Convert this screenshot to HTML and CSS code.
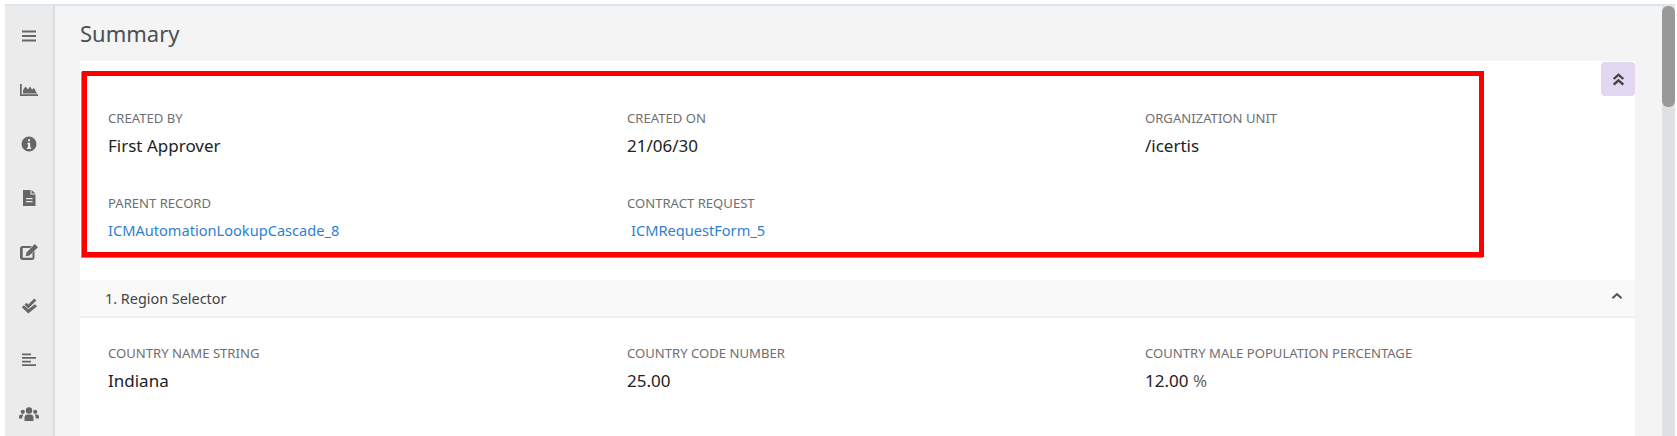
FILE: index.html
```html
<!DOCTYPE html>
<html>
<head>
    <title>Summary</title>
    <link rel="stylesheet" href="styles.css">
</head>
<body>
    <div class="app">
        <div class="sidebar">
            <svg class="nav-icon" viewBox="0 0 16 16"><path d="M1 2.500h14v2H1zM1 7h14v2H1zM1 11.500h14v2H1z"/></svg>
            <svg class="nav-icon" viewBox="0 0 18 16"><path d="M0 2h1.700v10.300H18V14H0z"/><path d="M3 11.500V8l2.500-3.500 2.500 3L10 4.500l2 3L14 6l3 5.500z"/></svg>
            <svg class="nav-icon" viewBox="0 0 16 16"><path fill-rule="evenodd" d="M8 .5a7.500 7.500 0 1 0 0 15 7.500 7.500 0 0 0 0-15zM7 3.200h2v2.100H7zM6.300 6.800h2.900v4.600h1v1.500H5.900v-1.500h1.100V8.300h-.7z"/></svg>
            <svg class="nav-icon" viewBox="0 0 16 16"><path fill-rule="evenodd" d="M2 0H9.500v4.500H14.500V16H2zM10.500 0L14.500 3.500h-4zM5 8h6.500v1.300H5zM5 11h6.500v1.300H5z"/></svg>
            <svg class="nav-icon" viewBox="0 0 18 16"><path fill-rule="evenodd" d="M2.500 2h9.500L10 4H3.200a.5.500 0 0 0-.5.500v8.800c0 .3.200.5.500.5h8.800a.5.500 0 0 0 .5-.5V9l2-2v6.500c0 1.400-1.100 2.500-2.500 2.500H2.500C1.100 16 0 14.900 0 13.500v-9C0 3.100 1.100 2 2.500 2z"/><path d="M14.800 0L18 3.200 9.500 11.500l-3.800.8.800-3.900z"/></svg>
            <svg class="nav-icon" viewBox="0 0 16 16"><path d="M13.300 .5L15.300 2.500 7.300 10.500 3.500 6.700 5.500 4.700l1.800 1.800z"/><path d="M14 6.200l2 2-8.700 7.300L.8 9.300l2-2 4.500 4z"/></svg>
            <svg class="nav-icon" viewBox="0 0 16 16"><path d="M1 1.500h9v1.700H1zM1 5.100h14v1.700H1zM1 8.700h9v1.700H1zM1 12.300h14V14H1z"/></svg>
            <svg class="nav-icon wide" viewBox="0 0 20 16"><circle cx="10" cy="4.500" r="3.200"/><circle cx="3.800" cy="5.800" r="2.100"/><circle cx="16.200" cy="5.800" r="2.100"/><path d="M5.500 15v-3.500C5.500 9.500 7 8.500 8 8.500h4c1 0 2.500 1 2.500 3V15zM0 12.500v-2c0-1.200 1-2 2-2h2.200c.4.300-.9.900-.9 4zM20 12.500v-2c0-1.200-1-2-2-2h-2.200c-.4.300.9.900.9 4z"/></svg>
        </div>

        <div class="main">
            <h1 class="page-title">Summary</h1>

            <div class="card">
                <button class="collapse-btn">
                    <svg viewBox="0 0 12 12"><path d="M6 .2l5.200 4.600-1.500 1.500L6 3.100 2.300 6.300.8 4.800z"/><path d="M6 5.400l5.200 4.600-1.500 1.500L6 8.300 2.300 11.500.8 10z"/></svg>
                </button>

                <div class="field-grid top-fields">
                    <div class="field">
                        <div class="field-label">CREATED BY</div>
                        <div class="field-value">First Approver</div>
                    </div>
                    <div class="field">
                        <div class="field-label">CREATED ON</div>
                        <div class="field-value">21/06/30</div>
                    </div>
                    <div class="field">
                        <div class="field-label">ORGANIZATION UNIT</div>
                        <div class="field-value">/icertis</div>
                    </div>
                    <div class="field">
                        <div class="field-label">PARENT RECORD</div>
                        <a class="field-link" href="#">ICMAutomationLookupCascade_8</a>
                    </div>
                    <div class="field">
                        <div class="field-label">CONTRACT REQUEST</div>
                        <a class="field-link indent" href="#">ICMRequestForm_5</a>
                    </div>
                </div>

                <!-- Red highlight drawn over the top fields -->
                <div class="highlight"></div>

                <div class="section-head">
                    <span>1. Region Selector</span>
                    <svg class="chevron" viewBox="0 0 12 8"><path d="M6 .8l5.300 4.800-1.400 1.500L6 3.500 2.100 7.100.7 5.600z"/></svg>
                </div>

                <div class="field-grid section-fields">
                    <div class="field">
                        <div class="field-label">COUNTRY NAME STRING</div>
                        <div class="field-value">Indiana</div>
                    </div>
                    <div class="field">
                        <div class="field-label">COUNTRY CODE NUMBER</div>
                        <div class="field-value">25.00</div>
                    </div>
                    <div class="field">
                        <div class="field-label">COUNTRY MALE POPULATION PERCENTAGE</div>
                        <div class="field-value">12.00 <span class="unit">%</span></div>
                    </div>
                </div>
            </div>
        </div>

        <div class="scrollbar">
            <div class="scroll-thumb"></div>
        </div>
    </div>
</body>
</html>
```

FILE: styles.css
```css
html, body {
    margin: 0;
    height: 100%;
    overflow: hidden;
    background-color: #fff;
}

body {
    font-family: "Noto Sans", "Open Sans", sans-serif;
    padding: 4px 2px 0 5px;
    box-sizing: border-box;
}

.app {
    display: flex;
    height: 432px;
    border-top: 2px solid #dbe5ee;
    box-sizing: border-box;
    background-color: #f4f4f4;
}

/* Left icon rail */
.sidebar {
    width: 48px;
    flex-shrink: 0;
    background-color: #ebebeb;
    border-right: 2px solid #dcdcdc;
    display: flex;
    flex-direction: column;
    align-items: center;
    padding-top: 22px;
    gap: 38px;
    overflow: hidden;
}

.nav-icon {
    height: 16px;
    width: 18px;
    flex-shrink: 0;
    fill: #666;
}

.nav-icon.wide {
    width: 22px;
}

.main {
    flex: 1;
    padding: 0 25px;
    min-width: 0;
}

.page-title {
    margin: 0;
    height: 55px;
    line-height: 54px;
    font-size: 22px;
    font-weight: 400;
    color: #4a4f57;
}

.card {
    position: relative;
    background-color: #fff;
    height: 375px;
    overflow: hidden;
}

.collapse-btn {
    position: absolute;
    top: 1px;
    right: 0;
    width: 34px;
    height: 34px;
    padding: 0;
    border: 0;
    border-radius: 4px;
    background-color: #e2d6f0;
}

.collapse-btn svg {
    display: block;
    width: 13px;
    height: 13px;
    margin: 0 auto;
    fill: #444;
}

.highlight {
    position: absolute;
    left: 2px;
    top: 10px;
    width: 1392px;
    height: 176px;
    border: 5px solid #f00;
    box-shadow: -1px 1px 0 #9a86cf;
}

.field-grid {
    display: grid;
    grid-template-columns: 519px 518px 1fr;
    padding-left: 28px;
}

.top-fields {
    padding-top: 49px;
    row-gap: 38px;
}

.section-fields {
    padding-top: 27px;
}

.field-label {
    font-size: 13.1px;
    line-height: 16px;
    color: #6f6f6f;
}

.field-value {
    margin-top: 9px;
    font-size: 17px;
    line-height: 22px;
    color: #222;
}

.unit {
    color: #666;
}

.field-link {
    display: block;
    margin-top: 8px;
    font-size: 14.6px;
    line-height: 22px;
    color: #2f7fd0;
    text-decoration: none;
}

.indent {
    margin-left: 4px;
}

.section-head {
    margin-top: 39px;
    height: 36px;
    background-color: #f9f9f9;
    border-bottom: 2px solid #efefef;
    display: flex;
    align-items: center;
    justify-content: space-between;
    padding: 0 12px 0 25px;
    font-size: 14.4px;
    color: #444;
}

.chevron {
    width: 12px;
    height: 8px;
    fill: #555;
    margin-bottom: 4px;
}

.scrollbar {
    width: 13px;
    flex-shrink: 0;
    margin-left: 2px;
    background-color: #dfe1e3;
}

.scroll-thumb {
    height: 101px;
    background-color: #999;
    border-radius: 6px;
}
```
